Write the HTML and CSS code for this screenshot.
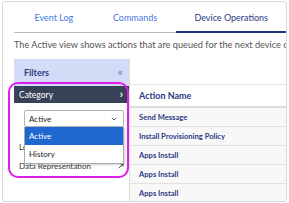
FILE: index.html
```html
<!DOCTYPE html>
<html lang="en">

<head>
    <meta charset="UTF-8">
    <meta name="viewport" content="width=device-width, initial-scale=1.0">
    <title>Device Operations</title>
    <link rel="stylesheet" href="styles.css">
</head>

<body>
    <div class="frame">
        <div class="tabs">
            <a class="tab">Event Log</a>
            <a class="tab">Commands</a>
            <a class="tab active">Device Operations</a>
        </div>

        <p class="desc">The Active view shows actions that are queued for the next device check-in.</p>

        <div class="layout">
            <div class="filters">
                <div class="filters-head">
                    <span>Filters</span>
                    <span class="collapse">&laquo;</span>
                </div>
                <div class="cat-bar">
                    <span>Category</span>
                    <span class="chev">&rsaquo;</span>
                </div>
                <div class="cat-body">
                    <div class="select-wrap">
                        <div class="select">
                            <span>Active</span>
                            <svg class="caret" width="6" height="4" viewBox="0 0 6 4">
                                <path d="M0.8 0.8 L3 3 L5.2 0.8" fill="none" stroke="#444" stroke-width="0.9" />
                            </svg>
                        </div>
                        <!-- liste ouverte par-dessus les autres filtres -->
                        <div class="options">
                            <div class="option selected">Active</div>
                            <div class="option">History</div>
                        </div>
                    </div>
                    <div class="filter-label">Location</div>
                    <div class="filter-label">
                        <span>Data Representation</span>
                        <svg width="6" height="6" viewBox="0 0 6 6">
                            <path d="M1 5 L5 1 M2.5 1 H5 V3.5" fill="none" stroke="#333" stroke-width="0.9" />
                        </svg>
                    </div>
                </div>
            </div>

            <div class="table">
                <div class="table-tools"></div>
                <div class="row head">Action Name</div>
                <div class="row">Send Message</div>
                <div class="row">Install Provisioning Policy</div>
                <div class="row">Apps Install</div>
                <div class="row">Apps Install</div>
                <div class="row">Apps Install</div>
            </div>
        </div>

        <div class="callout"></div>
    </div>
</body>

</html>
```

FILE: styles.css
```css
* {
    margin: 0;
    padding: 0;
    box-sizing: border-box;
    font-family: Lato, "Liberation Sans", sans-serif;
}

body {
    width: 289px;
    height: 203px;
    overflow: hidden;
    background-color: #fff;
}

.frame {
    position: relative;
    margin: 1px 2px 1px 2px;
    height: 201px;
    border: 1px solid #d9d9d9;
    border-radius: 3px;
    padding-left: 11px;
    overflow: hidden;
}

.tabs {
    display: flex;
    height: 31px;
    border-bottom: 1px solid #b9b9b9;
}

.tab {
    display: flex;
    align-items: center;
    justify-content: center;
    font-size: 9px;
    color: #4677dd;
    text-decoration: none;
    padding-top: 1px;
}

.tab:nth-child(1) {
    width: 80px;
}

.tab:nth-child(2) {
    width: 83px;
}

.tab:nth-child(3) {
    width: 110px;
}

.tab.active {
    color: #2b3b80;
    border-bottom: 2px solid #23347a;
    margin-bottom: -1px;
}

.desc {
    font-size: 9.2px;
    line-height: 12px;
    color: #555;
    white-space: nowrap;
    margin: 6px 0 8px 0;
}

.layout {
    display: flex;
    height: 142px;
}

.filters {
    width: 116px;
    border-right: 1px solid #dcdcdc;
    display: flex;
    flex-direction: column;
}

.filters-head {
    height: 27px;
    background-color: #d3dbf6;
    display: flex;
    align-items: center;
    justify-content: space-between;
    padding: 0 6px 0 10px;
    font-size: 9px;
    font-weight: 700;
    color: #2b3b80;
}

.collapse {
    font-weight: 400;
    font-size: 12px;
    color: #6a80c8;
    margin-top: -2px;
}

.cat-bar {
    height: 17px;
    background-color: #374257;
    color: #fff;
    display: flex;
    align-items: center;
    justify-content: space-between;
    padding: 0 6px 0 5px;
    font-size: 8.5px;
}

.chev {
    font-size: 11px;
    font-weight: 700;
    margin-top: -2px;
}

.cat-body {
    padding: 7px 0 0 5px;
}

.select-wrap {
    position: relative;
    margin: 0 5px 0 5px;
}

.select {
    height: 17px;
    border: 1px solid #b4b4b4;
    border-radius: 2px;
    display: flex;
    align-items: center;
    justify-content: space-between;
    padding: 0 6px 0 4px;
    font-size: 8px;
    color: #222;
}

.options {
    position: absolute;
    top: 100%;
    left: 0;
    right: 0;
    background-color: #fff;
    border: 1px solid #a9a9a9;
    border-top: none;
    box-shadow: 1px 1px 2px rgba(0, 0, 0, 0.2);
    z-index: 2;
}

.option {
    height: 18px;
    display: flex;
    align-items: center;
    padding-left: 4px;
    font-size: 8px;
    color: #222;
}

.option.selected {
    background-color: #1f68d2;
    color: #fff;
}

.filter-label {
    display: flex;
    align-items: center;
    justify-content: space-between;
    height: 19px;
    padding-right: 5px;
    font-size: 8px;
    color: #333;
}

.filter-label:nth-of-type(2) {
    margin-top: 10px;
}

.table {
    flex: 1;
    display: flex;
    flex-direction: column;
}

.table-tools {
    height: 25px;
    flex-shrink: 0;
}

.row {
    height: 19px;
    flex-shrink: 0;
    display: flex;
    align-items: center;
    padding-left: 9px;
    font-size: 7.6px;
    font-weight: 700;
    color: #2b3a86;
    background-color: #f8f8f8;
    border-bottom: 1px solid #e1e1e1;
}

.row.head {
    height: 24px;
    background-color: #fff;
    border-top: 1px solid #e3e3e3;
    border-bottom: 2px solid #dcdcdc;
    font-size: 9px;
}

.callout {
    position: absolute;
    left: 5px;
    top: 80px;
    width: 121px;
    height: 96px;
    border: 2.5px solid #dd1ee6;
    border-radius: 10px;
    z-index: 3;
}
```
